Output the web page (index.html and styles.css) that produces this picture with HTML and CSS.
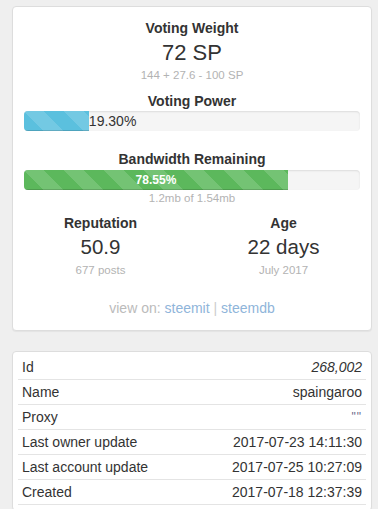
FILE: index.html
```html
<!DOCTYPE html>
<html lang="en">
<head>
    <meta charset="UTF-8">
    <meta name="viewport" content="width=device-width, initial-scale=1.0">
    <title>Account</title>
    <link rel="stylesheet" href="styles.css">
</head>
<body>
    <div class="panel">
        <div class="panel-body stats">
            <h4 class="label">Voting Weight</h4>
            <div class="big">72 SP</div>
            <div class="sub">144 + 27.6 - 100 SP</div>

            <h4 class="label power">Voting Power</h4>
            <div class="progress">
                <div class="bar bar-info" style="width: 19.30%"></div>
                <span class="bar-outside">19.30%</span>
            </div>

            <h4 class="label bandwidth">Bandwidth Remaining</h4>
            <div class="progress">
                <div class="bar bar-success" style="width: 78.55%">78.55%</div>
            </div>
            <div class="sub">1.2mb of 1.54mb</div>

            <div class="row">
                <div class="col">
                    <h4 class="label">Reputation</h4>
                    <div class="mid">50.9</div>
                    <div class="sub">677 posts</div>
                </div>
                <div class="col">
                    <h4 class="label">Age</h4>
                    <div class="mid">22 days</div>
                    <div class="sub">July 2017</div>
                </div>
            </div>

            <div class="view-on">view on: <a href="#">steemit</a> <span class="sep">|</span> <a href="#">steemdb</a></div>
        </div>
    </div>

    <div class="panel last">
        <div class="panel-body details">
            <table class="table">
                <tr><td>Id</td><td class="val"><em>268,002</em></td></tr>
                <tr><td>Name</td><td class="val">spaingaroo</td></tr>
                <tr><td>Proxy</td><td class="val"><span class="empty">""</span></td></tr>
                <tr><td>Last owner update</td><td class="val">2017-07-23 14:11:30</td></tr>
                <tr><td>Last account update</td><td class="val">2017-07-25 10:27:09</td></tr>
                <tr><td>Created</td><td class="val">2017-07-18 12:37:39</td></tr>
            </table>
        </div>
    </div>
</body>
</html>
```

FILE: styles.css
```css
body {
    margin: 0;
    padding: 6px 6px 0 12px;
    background-color: #efefef;
    font-family: "Liberation Sans", Arial, sans-serif;
    font-size: 14px;
    color: #333;
    width: 360px;
}

.panel {
    background-color: #fff;
    border: 1px solid #ddd;
    border-radius: 4px;
    box-shadow: 0 1px 1px rgba(0, 0, 0, 0.05);
    margin-bottom: 20px;
}

.panel.last {
    margin-bottom: 0;
}

.stats {
    padding: 11px 11px 13px;
    text-align: center;
}

.label {
    margin: 0;
    font-size: 14px;
    line-height: 20px;
    font-weight: bold;
}

.big {
    margin-top: 1px;
    font-size: 22px;
    line-height: 28px;
}

.sub {
    font-size: 11.5px;
    line-height: 16px;
    color: #b3b3b3;
}

.power {
    margin-top: 8px;
}

.bandwidth {
    margin-top: 18px;
    margin-bottom: 1px;
}

.progress {
    display: flex;
    height: 20px;
    background-color: #f5f5f5;
    border-radius: 4px;
    box-shadow: inset 0 1px 2px rgba(0, 0, 0, 0.1);
    overflow: hidden;
    text-align: left;
}

.bar {
    height: 20px;
    line-height: 20px;
    font-size: 12px;
    font-weight: bold;
    color: #fff;
    text-align: center;
    background-image: linear-gradient(45deg, rgba(255, 255, 255, .15) 25%, transparent 25%, transparent 50%, rgba(255, 255, 255, .15) 50%, rgba(255, 255, 255, .15) 75%, transparent 75%, transparent);
    background-size: 40px 40px;
    box-shadow: inset 0 -1px 0 rgba(0, 0, 0, 0.15);
}

.bar-info {
    background-color: #5bc0de;
}

.bar-success {
    background-color: #5cb85c;
}

.bar-outside {
    line-height: 20px;
    font-size: 14px;
    color: #333;
}

.row {
    display: grid;
    grid-template-columns: 1fr 1fr;
    margin: 7px -15px 0;
}

.mid {
    margin-top: 1px;
    font-size: 20.5px;
    line-height: 26px;
}

.col .sub {
    margin-top: 2px;
}

.view-on {
    margin-top: 21px;
    font-size: 14px;
    line-height: 18px;
    color: #bbb;
}

.view-on a {
    color: #8fb5da;
    text-decoration: none;
}

.sep {
    color: #ccc;
}

.details {
    padding: 3px 5px 5px;
}

.table {
    width: 100%;
    border-collapse: collapse;
}

.table td {
    height: 24px;
    padding: 0 4px;
    line-height: 20px;
    border-bottom: 1px solid #e4e4e4;
}

.val {
    text-align: right;
}

.empty {
    font-size: 12px;
    letter-spacing: 1px;
    vertical-align: top;
    color: #6a6a8a;
}
```
